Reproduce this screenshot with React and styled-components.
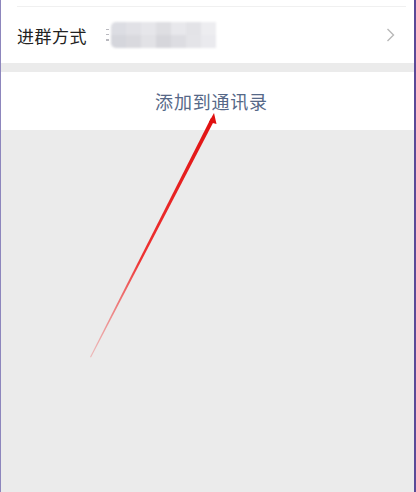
import React from "react";
import styled, { createGlobalStyle } from "styled-components";

const Global = createGlobalStyle`
  html, body { margin: 0; padding: 0; background: #ebebeb; }
  * { box-sizing: border-box; }
`;

const Frame = styled.div`
  position: relative;
  width: 416px;
  height: 492px;
  overflow: hidden;
  background: #ebebeb;
  border-left: 1px solid #8d86bd;
  border-right: 2px solid #5a4a98;
  display: flex;
  flex-direction: column;
  font-family: "Noto Sans CJK SC", "Noto Sans", sans-serif;
`;

const TopStrip = styled.div`
  height: 7px;
  background: #fff;
  padding: 0 8px 0 16px;
  display: flex;
  align-items: flex-end;
`;

const Divider = styled.div`
  height: 1px;
  flex: 1;
  background: #f0f0f0;
`;

const Row = styled.div`
  height: 56px;
  background: #fff;
  display: flex;
  align-items: center;
  padding: 0 19px 0 16px;
`;

const Label = styled.span`
  font-size: 17px;
  color: #222;
  letter-spacing: 0.5px;
  width: 89px;
  flex: none;
`;

const Marks = styled.div`
  width: 3px;
  height: 12px;
  margin-right: 2px;
  background: repeating-linear-gradient(
    to bottom,
    #b9b9bf 0 1.5px,
    transparent 1.5px 5px
  );
  filter: blur(0.4px);
`;

const Blur = styled.div`
  display: grid;
  grid-template-columns: repeat(7, 1fr);
  grid-template-rows: repeat(2, 1fr);
  width: 105px;
  height: 26px;
  filter: blur(1.2px);
  border-radius: 5px 0 0 5px;
  overflow: hidden;
`;

const Cell = styled.div`
  background: ${(p) => p.$c};
`;

const Spacer = styled.div`
  flex: 1;
`;

const Chevron = styled.svg`
  width: 9px;
  height: 14px;
  flex: none;
`;

const Gap = styled.div`
  height: 9px;
  background: #ebebeb;
`;

const ActionRow = styled.div`
  height: 58px;
  background: #fff;
  display: flex;
  align-items: center;
  justify-content: center;
  padding-left: 8px;
`;

const ActionText = styled.span`
  font-size: 18px;
  color: #566888;
  letter-spacing: 0.8px;
`;

const Rest = styled.div`
  flex: 1;
  background: #ebebeb;
`;

const Overlay = styled.svg`
  position: absolute;
  left: -1px;
  top: 0;
  width: 416px;
  height: 492px;
  pointer-events: none;
`;

const cells = [
  "#dcdde3", "#e1e1e6", "#e6e6ea", "#dedee2", "#e8e8ec", "#e3e3e7", "#ededf0",
  "#d5d6dc", "#d9d9de", "#e2e2e6", "#d6d6db", "#dddde2", "#e4e4e8", "#eaeaee",
];

export default function App() {
  return (
    <>
      <Global />
      <Frame>
        <TopStrip>
          <Divider />
        </TopStrip>
        <Row>
          <Label>进群方式</Label>
          <Marks />
          <Blur>
            {cells.map((c, i) => (
              <Cell key={i} $c={c} />
            ))}
          </Blur>
          <Spacer />
          <Chevron viewBox="0 0 9 14">
            <path d="M1.5 1 L7.5 7 L1.5 13" fill="none" stroke="#b8b8b8" strokeWidth="1.4" />
          </Chevron>
        </Row>
        <Gap />
        <ActionRow>
          <ActionText>添加到通讯录</ActionText>
        </ActionRow>
        <Rest />
        <Overlay viewBox="0 0 416 492">
          <defs>
            <linearGradient id="arr" x1="90" y1="357" x2="214" y2="114" gradientUnits="userSpaceOnUse">
              <stop offset="0" stopColor="#e88" stopOpacity="0.5" />
              <stop offset="0.4" stopColor="#e33" />
              <stop offset="1" stopColor="#e01010" />
            </linearGradient>
          </defs>
          <polygon points="90,357 211,118 214.5,120 91,357.5" fill="url(#arr)" />
          <polygon points="214,113 209,122 216.5,124" fill="#e01010" />
        </Overlay>
      </Frame>
    </>
  );
}
